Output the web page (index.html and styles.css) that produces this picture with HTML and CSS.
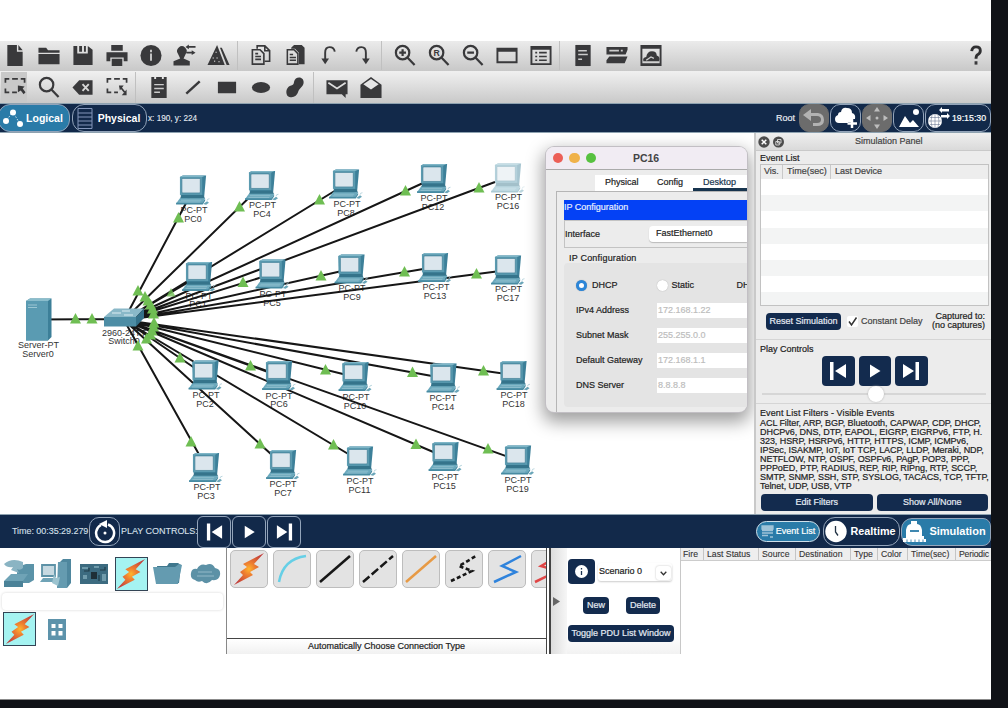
FILE: index.html
```html
<!DOCTYPE html>
<html lang="en">
<head>
<meta charset="utf-8">
<title>Packet Tracer</title>
<link rel="stylesheet" href="styles.css">
</head>
<body>
<svg class="defs" width="0" height="0">
  <defs>
    <radialGradient id="spark" cx=".5" cy=".5" r=".55"><stop offset="0" stop-color="#ffb52e"/><stop offset=".35" stop-color="#ee7f30"/><stop offset="1" stop-color="#c23f3c"/></radialGradient>
    <symbol id="pc" viewBox="0 0 36 32" overflow="visible">
      <path d="M4 1.5 L7 0 H31 L29 22 L26 24 H5Z" fill="#3d8099"/>
      <path d="M4 1.5H27V20H4Z" fill="#5b9bb0"/>
      <path d="M4 1.5L7 0H30.5L27 1.5Z" fill="#7fb6c7"/>
      <rect x="6" y="3" width="19" height="15" rx="1" fill="#dbe6ed" stroke="#3f7d94" stroke-width=".7"/>
      <path d="M6 20H28L30 24H4Z" fill="#35748b"/>
      <path d="M4 23.5H30L27 29H0Z" fill="#6ba9bd"/>
      <path d="M0 28H27L30 24V26L27.500 30H0Z" fill="#478ba2"/>
      <path d="M5 25.500H26M3.500 27.300H25" stroke="#a7ccd8" stroke-width=".6"/>
      <path d="M28 29.500L32 26.500L34 28L31 30.300Z" fill="#69a5b8"/>
      <path d="M32 26Q32 24 34.500 24" fill="none" stroke="#a9cbd6" stroke-width=".8"/>
    </symbol>
    <symbol id="up" viewBox="0 0 11 11" overflow="visible"><path d="M5.500 0L11 10.500H0Z" fill="#6fbe53"/></symbol>
    <symbol id="bolt" viewBox="0 0 34 34"><path d="M32 1L11 12L15 15L8 20L11 23L2 33L21 23L18 20L27 15L22 12Z" fill="url(#spark)"/></symbol>
    <symbol id="prev" viewBox="0 0 20 20"><path d="M2 1H5.500V19H2ZM18 3V17L7 10Z" fill="#fff"/></symbol>
    <symbol id="play" viewBox="0 0 20 20"><path d="M5 3.500L15.500 10L5 16.500Z" fill="#fff"/></symbol>
    <symbol id="next" viewBox="0 0 20 20"><path d="M14.500 1H18V19H14.500ZM2 3V17L13 10Z" fill="#fff"/></symbol>
  </defs>
</svg>

<div class="app">
  <header class="toolbar toolbar-main">
    <div class="group">
      <svg class="ic" viewBox="0 0 24 24"><path d="M4 1H14V8H20V23H4ZM15.500 1L20 6.500H15.500Z"/></svg>
      <svg class="ic" viewBox="0 0 24 24"><path d="M1 4H9L11 6.500H23V9H1ZM1 10.500H23V21H1Z"/></svg>
      <svg class="ic" viewBox="0 0 24 24"><path d="M2 2H6V10H17V2L22 6V22H2ZM8 2H11V8H8ZM13 2H15V8H13Z"/></svg>
      <svg class="ic" viewBox="0 0 24 24"><path d="M6 1H18V7H6ZM1 8.500H23V18H19V14H5V18H1ZM6.500 15.500H17.500V23H6.500Z"/></svg>
      <svg class="ic" viewBox="0 0 24 24"><circle cx="12" cy="12" r="11"/><path d="M11 6H13V8.500H11ZM11 10H13V17.500H11Z" fill="#c9c9c9"/></svg>
      <svg class="ic" viewBox="0 0 24 24"><path d="M4.500 10A5 5 0 1 1 13 10L10.500 15L17 18V22.500H0V18L7 15ZM12.500 3L16 .5V2H23V4H16V5.500ZM23 9L19 6.500V8H13.500V10H19V11.500Z"/></svg>
      <svg class="ic" viewBox="0 0 24 24"><path d="M10 1L18 22H0ZM13 4H15L23 22H20Z"/><path d="M9 8V9M6 14V15M10 14V15M12 18V19M7 18H8" stroke="#ccc" stroke-width="1.500"/></svg>
    </div>
    <div class="group">
      <svg class="ic" viewBox="0 0 24 24"><g fill="none" stroke="#39393b" stroke-width="1.700"><path d="M8 5V2H16L21 7V18H16M3 6H11L15 10V21H3ZM16 2V7H21"/><path d="M6 10H9M6 13H12M6 16H12"/></g></svg>
      <svg class="ic" viewBox="0 0 24 24"><path d="M8 4L11 1H19L22 4V21H16V9L12 5H8Z"/><g fill="none" stroke="#39393b" stroke-width="1.600"><path d="M4 6H11L15 10V21H4Z"/><path d="M6.500 11H10M6.500 14H13M6.500 17H13"/></g></svg>
      <svg class="ic" viewBox="0 0 24 24"><path d="M18 8C17 2 8 1 8 9V16" fill="none" stroke="#39393b" stroke-width="2"/><path d="M4 15H12L8 21Z"/></svg>
      <svg class="ic" viewBox="0 0 24 24"><path d="M5 8C6 2 15 1 15 9V16" fill="none" stroke="#39393b" stroke-width="2"/><path d="M11 15H19L15 21Z"/></svg>
    </div>
    <div class="group">
      <svg class="ic" viewBox="0 0 24 24"><g fill="none" stroke="#39393b" stroke-width="2.300"><circle cx="9.500" cy="9" r="7"/><path d="M14.500 14L22 22M6 9H13M9.500 5.500V12.500"/></g></svg>
      <svg class="ic" viewBox="0 0 24 24"><g fill="none" stroke="#39393b" stroke-width="2.300"><circle cx="9.500" cy="9" r="7"/><path d="M14.500 14L22 22"/></g><text x="9.500" y="12.300" class="mag-letter">R</text></svg>
      <svg class="ic" viewBox="0 0 24 24"><g fill="none" stroke="#39393b" stroke-width="2.300"><circle cx="9.500" cy="9" r="7"/><path d="M14.500 14L22 22M6 9H13"/></g></svg>
      <svg class="ic" viewBox="0 0 24 24"><path d="M1 4H23V20H1ZM3 8V18H21V8Z" fill-rule="evenodd"/></svg>
      <svg class="ic" viewBox="0 0 24 24"><path d="M1 2H23V22H1ZM3 6V20H21V6Z" fill-rule="evenodd"/><path d="M6 9H8M10 9H18M6 13H8M10 13H18M6 17H8M10 17H18" stroke="#39393b" stroke-width="1.600"/></svg>
    </div>
    <div class="group last">
      <svg class="ic" viewBox="0 0 24 24"><path d="M4 1H20V23H4Z"/><path d="M7 7H16M7 11H17M7 16H11" stroke="#ccc" stroke-width="1.500"/></svg>
      <svg class="ic" viewBox="0 0 24 24"><path d="M1 3H23V6L21 11H1ZM4 13H23L20 20H1V17Z"/><path d="M4 7H14M16 7H18" stroke="#ccc" stroke-width="1.900"/></svg>
      <svg class="ic" viewBox="0 0 24 24"><path d="M1 1H23V23H1ZM3 5V20H21V5Z" fill-rule="evenodd"/><path d="M4 18Q3 14 7 13.500Q8 7.500 13 7.500Q18 7.500 18 12Q22 13 20.500 18Z"/><path d="M7 17L12 13.500L15 15" fill="none" stroke="#ccc" stroke-width="1.400"/></svg>
    </div>
    <svg class="ic help" viewBox="0 0 24 24"><path d="M7.500 7.500Q8 3 12 3Q16.500 3 16.500 7Q16.500 9.500 14 11Q12 12 12 15.500" fill="none" stroke="#2f2f31" stroke-width="3"/><rect x="10.500" y="18" width="3" height="3.500"/></svg>
  </header>

  <div class="toolbar toolbar-draw">
    <div class="group">
      <svg class="ic picked" viewBox="0 0 24 24"><path d="M2 7V3H6M9 3H15M18 3H22V7M2 13V17H6M9 17H14" fill="none" stroke="#39393b" stroke-width="1.800"/><path d="M15 10L22 11L20 13L23 17L21 19L18 15L15 17Z"/></svg>
      <svg class="ic" viewBox="0 0 24 24"><g fill="none" stroke="#39393b" stroke-width="2.300"><circle cx="9.500" cy="9" r="7"/><path d="M14.500 14L22 22"/></g></svg>
      <svg class="ic" viewBox="0 0 24 24"><path d="M1 12L8 4.500H22V19.500H8Z"/><path d="M11.500 8.500L18 15.500M18 8.500L11.500 15.500" stroke="#d6d6d6" stroke-width="2"/></svg>
      <svg class="ic" viewBox="0 0 24 24"><path d="M2 7V3H6M9 3H15M18 3H22V7M2 13V17H6M9 17H13M16 12L20 17" fill="none" stroke="#39393b" stroke-width="1.800"/><path d="M14 10H19L15 15ZM22 14V20H17Z"/></svg>
    </div>
    <div class="group">
      <svg class="ic" viewBox="0 0 24 24"><path d="M4 1H7V3H9V1H15V3H17V1H20V23H4Z"/><path d="M7 9H17M7 13H17M7 17H13" stroke="#ccc" stroke-width="1.500"/></svg>
      <svg class="ic" viewBox="0 0 24 24"><path d="M5 18.500L19 5.500" stroke="#39393b" stroke-width="2.500"/></svg>
      <svg class="ic" viewBox="0 0 24 24"><path d="M2.500 6H21.500V18H2.500Z"/></svg>
      <svg class="ic" viewBox="0 0 24 24"><ellipse cx="12" cy="12" rx="9.500" ry="5.700"/></svg>
      <svg class="ic" viewBox="0 0 24 24"><path d="M11 6C12 0 21 0 21 6.500C21 11 17 12 15.500 16C14 22 8 24 4 20.500C1.500 16 4 11 8 10Q11 9 11 6Z"/></svg>
    </div>
    <div class="group last">
      <svg class="ic" viewBox="0 0 24 24"><path d="M1 4.500H23V19H21V23L17 19H1Z"/><path d="M3 7L12 13L21 7" fill="none" stroke="#ddd" stroke-width="1.800"/></svg>
      <svg class="ic" viewBox="0 0 24 24"><path d="M1 9L12 1L23 9V23H1Z"/><path d="M4 8.500L12 3L20 8.500L12 14Z" fill="#e6e6e6"/></svg>
    </div>
  </div>

  <nav class="viewbar">
    <button class="tab tab-logical"><svg width="22" height="20" viewBox="0 0 22 20"><path d="M3 14L11 4L18 16" fill="none" stroke="#cfe4f0" stroke-width="1" stroke-dasharray="1.500 1.500"/><circle cx="4" cy="13" r="3" fill="#fff"/><circle cx="11" cy="4.500" r="3" fill="#fff"/><circle cx="18" cy="16" r="3" fill="#fff"/></svg>Logical</button>
    <button class="tab tab-physical"><svg width="16" height="21" viewBox="0 0 16 21"><path d="M1 .5H15V20.500H1ZM1 5H15M1 9H15M1 13H15M1 17H15" fill="none" stroke="#8396ba" stroke-width="1"/></svg>Physical</button>
    <span class="coords">x: 190, y: 224</span>
    <span class="root">Root</span>
    <div class="navbtns">
      <button class="nb off"><svg width="24" height="20" viewBox="0 0 24 20"><path d="M1 7L9 1V5H16Q22 6 22 12Q22 18 15 18H11V15H15Q19 15 19 11.500Q19 8 15 8H9V13Z" fill="#b2b2b2"/></svg></button>
      <button class="nb"><svg width="24" height="24" viewBox="0 0 24 24"><path d="M5 17Q1 17 1 13Q1 10 4 9Q4 6 7 6Q8 1 13 2Q18 2 18 7Q22 8 21 13H17V16H14V17Z" fill="#fff"/><path d="M18 13V22M13.500 17.500H23" stroke="#fff" stroke-width="2.500"/></svg></button>
      <button class="nb off"><svg width="22" height="22" viewBox="0 0 22 22"><path d="M11 0L14 4.500H8ZM11 22L14 17.500H8ZM0 11L4.500 8V14ZM22 11L17.500 8V14Z" fill="#bdbdbd"/><circle cx="11" cy="11" r="1.500" fill="#bdbdbd"/></svg></button>
      <button class="nb"><svg width="22" height="20" viewBox="0 0 22 20"><path d="M1 19L7 8L12 15L15 12L21 19Z" fill="#fff"/><circle cx="18" cy="4" r="3" fill="#fff"/></svg></button>
      <button class="nb clock"><svg width="23" height="22" viewBox="0 0 23 22"><circle cx="8" cy="14" r="7" fill="#fff"/><path d="M1 14H15M3 10.500H13M3 17.500H13M8 7V21M5 8Q3 14 5 20M11 8Q13 14 11 20" fill="none" stroke="#566684" stroke-width=".5"/><path d="M12 3L15 0V2H22V4.500H15V6ZM23 9L20 6V8H14V10.500H20V12Z" fill="#fff"/></svg>19:15:30</button>
    </div>
  </nav>

  <main class="work">
    <section class="canvas">
      <svg class="topology" width="756" height="381" viewBox="0 133 756 381">
        <g class="names">
          <text x="38.500" y="348">Server-PT</text><text x="38" y="356.500">Server0</text>
          <text x="124" y="335.500">2960-24TT</text><text x="124" y="344">Switch0</text>
          <text x="194" y="213">PC-PT</text><text x="193" y="222">PC0</text>
          <text x="262.500" y="208">PC-PT</text><text x="262" y="217">PC4</text>
          <text x="347" y="206.500">PC-PT</text><text x="346" y="215.500">PC8</text>
          <text x="434" y="201">PC-PT</text><text x="433" y="209.500">PC12</text>
          <text x="508.500" y="200">PC-PT</text><text x="508" y="209">PC16</text>
          <text x="199" y="298.500">PC-PT</text><text x="198" y="307">PC1</text>
          <text x="273" y="297">PC-PT</text><text x="272" y="306">PC5</text>
          <text x="352" y="291">PC-PT</text><text x="352" y="300">PC9</text>
          <text x="436" y="290">PC-PT</text><text x="435" y="298.500">PC13</text>
          <text x="508.500" y="292">PC-PT</text><text x="508" y="301">PC17</text>
          <text x="206" y="398">PC-PT</text><text x="205" y="406.500">PC2</text>
          <text x="279" y="398.500">PC-PT</text><text x="279" y="407">PC6</text>
          <text x="356" y="400">PC-PT</text><text x="355" y="409">PC10</text>
          <text x="443" y="401">PC-PT</text><text x="443" y="410">PC14</text>
          <text x="514" y="398">PC-PT</text><text x="513.500" y="407">PC18</text>
          <text x="207" y="490">PC-PT</text><text x="206" y="499">PC3</text>
          <text x="283" y="487">PC-PT</text><text x="283" y="496">PC7</text>
          <text x="360" y="484">PC-PT</text><text x="359.500" y="493">PC11</text>
          <text x="445" y="479.500">PC-PT</text><text x="444.500" y="488.500">PC15</text>
          <text x="518" y="483">PC-PT</text><text x="517.500" y="491.500">PC19</text>
        </g>
        <path class="cables" d="M38 319.500L124 319M124 320L193 190M124 320L262 185M124 320L346 184M124 320L434 178M124 320L495 182M124 320L199 276M124 320L272 274M124 320L351 269M124 320L435 267M124 320L508 270M124 320L205 375M124 320L279 376M124 320L355 377M124 320L443 378M124 320L513 375M124 320L206 467M124 320L283 465M124 320L360 461M124 320L445 457M124 320L517 460"/>
        <g>
          <path d="M26 301L30 298.500H51.500V337L48 340.500H26Z" fill="#3c7f98"/><path d="M26 301H48V340.500H26Z" fill="#5a9bb2"/><path d="M26 301L30 298.500H51.500L48 301Z" fill="#8abdcc"/><path d="M28 305H37M28 307.500H37" stroke="#acd0dc" stroke-width=".8"/>
          <path d="M104 317L114 308.500H144L136 317Z" fill="#8ab8c8"/><path d="M104 317H136V326.500H104Z" fill="#4d8da5"/><path d="M136 317L144 308.500V318L136 326.500Z" fill="#34718a"/><path d="M112 313H121M122 311H130M124 315H133" stroke="#dcecf1" stroke-width="1.200"/>
        </g>
        <g>
          <use href="#pc" x="176" y="175.500" width="35" height="31"/><use href="#pc" x="245" y="171" width="35" height="31"/>
          <use href="#pc" x="329" y="169.500" width="35" height="31"/><use href="#pc" x="417" y="164" width="35" height="31"/>
          <use href="#pc" x="491" y="163.500" width="35" height="31" class="ghost"/><use href="#pc" x="182" y="262" width="35" height="31"/>
          <use href="#pc" x="255.500" y="259.500" width="35" height="31"/><use href="#pc" x="334.500" y="254.500" width="35" height="31"/>
          <use href="#pc" x="418" y="253" width="35" height="31"/><use href="#pc" x="491" y="255.500" width="35" height="31"/>
          <use href="#pc" x="188.500" y="360.500" width="35" height="31"/><use href="#pc" x="262" y="361" width="35" height="31"/>
          <use href="#pc" x="338.500" y="362" width="35" height="31"/><use href="#pc" x="426.500" y="363.500" width="35" height="31"/>
          <use href="#pc" x="496.500" y="361" width="35" height="31"/><use href="#pc" x="189" y="453" width="35" height="31"/>
          <use href="#pc" x="266" y="450" width="35" height="31"/><use href="#pc" x="343" y="446.500" width="35" height="31"/>
          <use href="#pc" x="428.500" y="442" width="35" height="31"/><use href="#pc" x="501" y="445.500" width="35" height="31"/>
        </g>
        <g>
          <use href="#up" x="70" y="313" width="11" height="11"/><use href="#up" x="86.500" y="313" width="11" height="11"/>
          <use href="#up" x="173" y="212" width="11" height="11"/><use href="#up" x="234" y="201" width="11" height="11"/>
          <use href="#up" x="314" y="194" width="11" height="11"/><use href="#up" x="400" y="185" width="11" height="11"/>
          <use href="#up" x="473.500" y="182" width="11" height="11"/><use href="#up" x="165.500" y="288" width="11" height="9" opacity=".8"/>
          <use href="#up" x="237.500" y="276.500" width="11" height="11"/><use href="#up" x="315.500" y="270" width="11" height="11"/>
          <use href="#up" x="399" y="266" width="11" height="11"/><use href="#up" x="471" y="268" width="11" height="11"/>
          <use href="#up" x="174.500" y="352" width="11" height="11"/><use href="#up" x="245" y="360" width="11" height="11"/>
          <use href="#up" x="320" y="364" width="11" height="11"/><use href="#up" x="407" y="366.500" width="11" height="11"/>
          <use href="#up" x="478" y="365" width="11" height="11"/><use href="#up" x="185.500" y="436" width="11" height="11"/>
          <use href="#up" x="254.500" y="438" width="11" height="11"/><use href="#up" x="328" y="439" width="11" height="11"/>
          <use href="#up" x="410.500" y="438.500" width="11" height="11"/><use href="#up" x="482.500" y="443" width="11" height="11"/>
          <use href="#up" x="132.500" y="285" width="11" height="11"/><use href="#up" x="139.500" y="291" width="11" height="11"/>
          <use href="#up" x="142.500" y="295" width="11" height="11"/><use href="#up" x="145" y="299" width="11" height="11"/>
          <use href="#up" x="147" y="303" width="11" height="11"/><use href="#up" x="148" y="308" width="11" height="11"/>
          <use href="#up" x="148.500" y="317" width="11" height="11"/><use href="#up" x="148" y="321" width="11" height="11"/>
          <use href="#up" x="146.500" y="325" width="11" height="11"/><use href="#up" x="145" y="329" width="11" height="11"/>
          <use href="#up" x="141" y="333" width="11" height="11"/><use href="#up" x="132.500" y="340" width="11" height="11"/>
        </g>
      </svg>

      <div class="dialog">
        <div class="titlebar"><i class="dot red"></i><i class="dot amber"></i><i class="dot green"></i><b>PC16</b></div>
        <div class="dialog-body">
          <div class="dtabs"><span>Physical</span><span>Config</span><span class="current">Desktop</span></div>
          <div class="pane">
            <div class="bluebar">IP Configuration</div>
            <div class="iface"><span>Interface</span><div class="combo">FastEthernet0</div></div>
            <div class="legend">IP Configuration</div>
            <div class="fieldset">
              <div class="radios"><i class="radio on"></i><span class="dhcp">DHCP</span><i class="radio"></i><span class="static">Static</span><span>DH</span></div>
              <div class="field"><span>IPv4 Address</span><div>172.168.1.22</div></div>
              <div class="field"><span>Subnet Mask</span><div>255.255.0.0</div></div>
              <div class="field"><span>Default Gateway</span><div>172.168.1.1</div></div>
              <div class="field"><span>DNS Server</span><div>8.8.8.8</div></div>
            </div>
          </div>
        </div>
      </div>
    </section>

    <aside class="sim">
      <div class="sim-head">
        <svg width="26" height="12" viewBox="0 0 26 12"><circle cx="6" cy="6" r="5.700" fill="#4c4c4c"/><path d="M3.700 3.700L8.300 8.300M8.300 3.700L3.700 8.300" stroke="#fff" stroke-width="1.500"/><circle cx="20.500" cy="6" r="5.500" fill="#4c4c4c"/><path d="M19.500 3.500H23V7H19.500ZM17.800 5.500H21.300V9H17.800Z" fill="none" stroke="#ddd" stroke-width=".9"/></svg>
        <span>Simulation Panel</span>
      </div>
      <div class="sim-body">
        <div class="strong">Event List</div>
        <div class="events">
          <div class="ehead"><span class="vis">Vis.</span><span class="time">Time(sec)</span><span>Last Device</span></div>
          <div class="stripes"></div>
        </div>
        <div class="resetrow">
          <button class="btn reset">Reset Simulation</button>
          <label class="delay"><svg width="13" height="13" viewBox="0 0 13 13"><rect x="1" y="1" width="11" height="11" rx="2" fill="#fff"/><path d="M3 6.500L5.500 10L10.500 2.500" fill="none" stroke="#333" stroke-width="1.500"/></svg>Constant Delay</label>
          <div class="captured">Captured to:<br>(no captures)</div>
        </div>
        <div class="playbox">
          <div class="playtitle">Play Controls</div>
          <div class="playbtns">
            <button class="btn"><svg width="20" height="20"><use href="#prev"/></svg></button>
            <button class="btn"><svg width="20" height="20"><use href="#play"/></svg></button>
            <button class="btn"><svg width="20" height="20"><use href="#next"/></svg></button>
          </div>
          <div class="slider"><i></i></div>
        </div>
        <div class="filters">
          <div class="strong">Event List Filters - Visible Events</div>
          <p>ACL Filter, ARP, BGP, Bluetooth, CAPWAP, CDP, DHCP,<br>DHCPv6, DNS, DTP, EAPOL, EIGRP, EIGRPv6, FTP, H.<br>323, HSRP, HSRPv6, HTTP, HTTPS, ICMP, ICMPv6,<br>IPSec, ISAKMP, IoT, IoT TCP, LACP, LLDP, Meraki, NDP,<br>NETFLOW, NTP, OSPF, OSPFv6, PAgP, POP3, PPP,<br>PPPoED, PTP, RADIUS, REP, RIP, RIPng, RTP, SCCP,<br>SMTP, SNMP, SSH, STP, SYSLOG, TACACS, TCP, TFTP,<br>Telnet, UDP, USB, VTP</p>
          <div class="filterbtns"><button class="btn">Edit Filters</button><button class="btn">Show All/None</button></div>
        </div>
      </div>
    </aside>
  </main>

  <div class="timebar">
    <span class="clocktext">Time: 00:35:29.279</span>
    <button class="nb cycle"><svg width="22" height="24" viewBox="0 0 22 24"><path d="M7 5A9 9 0 1 0 14 4.500" fill="none" stroke="#fff" stroke-width="2.500"/><path d="M13 0V8L5 4Z" fill="#fff"/><circle cx="11" cy="13" r="1.500" fill="#fff"/></svg></button>
    <span class="pc-label">PLAY CONTROLS:</span>
    <button class="pbtn"><svg width="19" height="20"><use href="#prev"/></svg></button>
    <button class="pbtn"><svg width="19" height="20"><use href="#play"/></svg></button>
    <button class="pbtn"><svg width="19" height="20"><use href="#next"/></svg></button>
    <div class="modes">
      <button class="mode evlist"><svg width="13" height="14" viewBox="0 0 13 14"><path d="M1 1H12V4H1ZM1 5.500H12M1 8H12M1 10.500H7M9 12H12" fill="#9fc3d8" stroke="#9fc3d8" stroke-width="1.300"/></svg>Event List</button>
      <button class="mode real"><svg width="22" height="23" viewBox="0 0 22 23"><circle cx="11" cy="11.500" r="10.700" fill="#fff"/><path d="M10.500 6V12L13 15.500" fill="none" stroke="#234" stroke-width="1.300"/></svg>Realtime</button>
      <button class="mode simu"><svg width="23" height="22" viewBox="0 0 23 22"><path d="M3 15V9Q4 3 8 3V0H14V3Q18 3 19 9V15H21V18H23V21H0V17H3Z" fill="#fff"/><path d="M7 10H16" stroke="#2a7ba8" stroke-width="1.800"/><path d="M4 18.500V21M8 18.500V21M12 18.500V21M16 18.500V21M20 18.500V21" stroke="#4c8cb0" stroke-width="1"/></svg>Simulation</button>
    </div>
  </div>

  <footer class="bottom">
    <section class="palette">
      <div class="prow">
        <div class="dev"><svg width="32" height="30" viewBox="0 0 32 30"><path d="M14 8L23 5H31V21L26 24H14Z" fill="#5b93a8"/><path d="M1 5Q9-2 20 3V9Q17 12 14 10L16 14L8 11L10 8Q4 9 1 5Z" fill="#8ab4c3"/><path d="M1 22L8 15H25L20 22V28H1Z" fill="#6fa3b6"/><path d="M1 22H20V28H1Z" fill="#4b8298"/></svg></div>
        <div class="dev"><svg width="32" height="30" viewBox="0 0 32 30"><path d="M20 3L23 0H31V24L27 29H17Z" fill="#4f879e"/><path d="M18 3H27V29H17Z" fill="#659bb0"/><path d="M2 6H15V17H2Z" fill="#c6d9e1" stroke="#5d92a7" stroke-width="1.800"/><path d="M3 19H17L14 23H0Z" fill="#6fa3b6"/><path d="M14 15L16 19L20 18L18 27L12 24Z" fill="#9cc3cf"/></svg></div>
        <div class="dev"><svg width="30" height="24" viewBox="0 0 30 24"><path d="M1 2H29V22H1Z" fill="#3c6b80"/><path d="M3 5H9V7H3ZM15 4H20V6H15ZM23 12H27V19H23ZM4 13H8V17H4Z" fill="#6f9bab"/><path d="M12 10H18V17H12Z" fill="#1f2f37"/><path d="M10 6V9H5M21 8H26V5M20 19V13" fill="none" stroke="#203d49" stroke-width="1.200"/></svg></div>
        <div class="dev chosen"><svg width="32" height="32"><use href="#bolt"/></svg></div>
        <div class="dev"><svg width="30" height="24" viewBox="0 0 30 24"><path d="M4 4L14 4L16 1H25L28 3L26 21H6Z" fill="#3f778d"/><path d="M0 5H22L26 2L29 3L25 22H3Z" fill="#649bb0"/></svg></div>
        <div class="dev"><svg width="31" height="22" viewBox="0 0 31 22"><path d="M5 17Q0 16 1 10Q2 5 7 6Q10 0 16 2Q22-1 25 5Q31 6 30 12Q29 18 22 17Q17 23 12 18Q8 20 5 17Z" fill="#5c91a6"/><path d="M8 9H22M7 13H24" stroke="#93b9c8" stroke-width="1"/></svg></div>
      </div>
      <div class="search"></div>
      <div class="prow second">
        <div class="dev chosen"><svg width="32" height="32"><use href="#bolt"/></svg></div>
        <div class="dev"><svg width="18" height="21" viewBox="0 0 18 21"><path d="M0 0H18V21H0Z" fill="#5d93ab"/><path d="M3.500 5H7.500V9H3.500ZM10.500 5H14.500V9H10.500ZM3.500 12H7.500V16.500H3.500ZM10.500 12H14.500V16.500H10.500Z" fill="#fff"/></svg></div>
      </div>
    </section>
    <section class="conns">
      <div class="crow">
        <div class="cbtn"><svg width="34" height="34"><use href="#bolt"/></svg></div>
        <div class="cbtn"><svg width="34" height="34" viewBox="0 0 34 34"><path d="M4 30Q8 7 31 4" fill="none" stroke="#66cfe6" stroke-width="2.500"/></svg></div>
        <div class="cbtn"><svg width="34" height="34" viewBox="0 0 34 34"><path d="M2 30L32 4" stroke="#171717" stroke-width="2.500"/></svg></div>
        <div class="cbtn"><svg width="34" height="34" viewBox="0 0 34 34"><path d="M2 30L32 4" stroke="#171717" stroke-width="2.500" stroke-dasharray="8.500 3"/></svg></div>
        <div class="cbtn"><svg width="34" height="34" viewBox="0 0 34 34"><path d="M2 30L32 4" stroke="#e79a45" stroke-width="2.500"/></svg></div>
        <div class="cbtn"><svg width="34" height="34" viewBox="0 0 34 34"><path d="M4 29L25 19L12 14L29 4" fill="none" stroke="#171717" stroke-width="2.600" stroke-dasharray="4 2.500"/></svg></div>
        <div class="cbtn"><svg width="34" height="34" viewBox="0 0 34 34"><path d="M4 30L26 20L12 14L31 4" fill="none" stroke="#2f83dc" stroke-width="2.500"/></svg></div>
        <div class="cbtn"><svg width="34" height="34" viewBox="0 0 34 34"><path d="M2 30L25 19L8 14L20 7" fill="none" stroke="#e04545" stroke-width="2.500"/></svg></div>
      </div>
      <div class="ctitle">Automatically Choose Connection Type</div>
    </section>
    <div class="splitter"><svg width="7" height="9" viewBox="0 0 7 9"><path d="M0 0L7 4.500L0 9Z" fill="#666"/></svg></div>
    <section class="scenario">
      <div class="srow1">
        <button class="btn info"><svg width="15" height="15" viewBox="0 0 15 15"><circle cx="7.500" cy="7.500" r="6.500" fill="#fff"/><path d="M7.500 4V5.500M7.500 7V11" stroke="#17304f" stroke-width="1.300"/></svg></button>
        <div class="select"><span>Scenario 0</span><i><svg width="7" height="5" viewBox="0 0 7 5"><path d="M.7 .8L3.500 3.800L6.300 .8" fill="none" stroke="#333" stroke-width="1.300"/></svg></i></div>
      </div>
      <div class="srow2"><button class="btn">New</button><button class="btn">Delete</button></div>
      <button class="btn toggle">Toggle PDU List Window</button>
    </section>
    <section class="pdu">
      <div class="phead"><span class="c1">Fire</span><span class="c2">Last Status</span><span class="c3">Source</span><span class="c4">Destination</span><span class="c5">Type</span><span class="c6">Color</span><span class="c7">Time(sec)</span><span class="c8">Periodic</span></div>
    </section>
  </footer>
</div>
</body>
</html>
```
FILE: styles.css
```css
* { box-sizing: border-box; }
html, body { margin: 0; height: 708px; overflow: hidden; }
body { background: #101217; font: 9px/11px "Liberation Sans", Arial, sans-serif; color: #222; white-space: nowrap; -webkit-text-stroke: .2px; }
button { font: inherit; margin: 0; padding: 0; border: 0; display: flex; align-items: center; justify-content: center; color: #fff; }
svg { display: block; flex: none; }
b, .tab, .real, .simu { -webkit-text-stroke: 0; }
.defs { position: absolute; }
.app { width: 991px; height: 700px; padding-top: 41px; background: #fff; border-bottom: 1px solid #8b8b8b; overflow: hidden; }

.toolbar { display: flex; background: linear-gradient(#ebebeb, #c8c8c8); align-items: center; }
.toolbar-main { height: 30px; padding-bottom: 1px; }
.toolbar-draw { height: 32px; background: linear-gradient(#efefef, #c9c9c9); border-top: 1px solid #efefef; }
.group { display: flex; height: 100%; align-items: center; margin-right: 6px; border-right: 1px solid #c0c0c0; padding-right: 1px; }
.group:first-child { margin-left: -2px; }
.group.last { border: 0; }
.ic { width: 34px; height: 23px; fill: #39393b; }
.ic.picked { background: linear-gradient(90deg, transparent 3px, #c9c9c9 3px, #c9c9c9 29px, transparent 29px); height: 31px; padding: 4px 0; }
.help { margin-left: auto; margin-right: -2px; }
.mag-letter { font-size: 9px; font-weight: bold; text-anchor: middle; }

.viewbar { height: 30px; background: #12294a; border-top: 1px solid #8ea2b0; border-bottom: 1px solid #8ea2b0; display: flex; align-items: center; color: #e6ebf2; }
.tab { height: 28px; border: 1px solid #93a4ba; border-radius: 12px; font-weight: bold; font-size: 10.500px; }
.tab-logical { width: 72px; margin-left: -2px; background: #2a7ba8; gap: 2px; padding-right: 3px; }
.tab-physical { width: 75px; margin-left: 2px; background: #12294a; gap: 5px; padding-right: 2px; }
.coords { margin-left: 1px; font-size: 8.200px; -webkit-text-stroke: .1px; }
.root { margin-left: auto; margin-right: 4px; }
.navbtns { display: flex; gap: 1px; }
.nb { width: 31px; height: 28px; border: 1px solid #93a4ba; border-radius: 10px; background: #12294a; }
.nb.off { background: #6c6c6c; border-color: #6c6c6c; width: 30px; }
.nb.clock { width: 66px; font-size: 8.800px; gap: 2px; padding-right: 3px; }

.work { display: flex; height: 381px; }
.canvas { width: 756px; position: relative; background: #fff; border-right: 2px solid #c9c9c9; overflow: hidden; }
.names { font-size: 9px; text-anchor: middle; fill: #333; }
.cables { stroke: #161616; stroke-width: 2; fill: none; }
.ghost { opacity: .45; }
.topology { width: 756px; }

.dialog { position: absolute; left: 546px; top: 14px; width: 201px; height: 265px; background: #ececec; border-radius: 8px; overflow: hidden; box-shadow: 0 0 0 1px #c2bfc4, 0 7px 17px 3px rgba(0,0,0,.38); font-size: 9px; }
.titlebar { height: 23px; background: #f1ecf3; border-bottom: 1px solid #aaa; display: flex; align-items: center; gap: 6px; padding-left: 7px; font-size: 10.500px; }
.titlebar b { margin-left: 31px; color: #444; }
.dot { width: 10.300px; height: 10.300px; border-radius: 50%; }
.red { background: #ec5f57; } .amber { background: #f0b24a; } .green { background: #57c140; }
.dialog-body { padding: 5px 0 0 10px; height: 243px; }
.dtabs { margin-left: 39px; height: 16px; background: #fff; display: flex; align-items: center; }
.dtabs span { padding-left: 10px; width: 52px; height: 16px; line-height: 15px; }
.dtabs span + span { width: 46px; }
.dtabs .current { width: 54px; border-bottom: 3px solid #17344e; color: #17344e; }
.pane { border: 1px solid #b5b5b5; border-right: 0; border-bottom: 0; height: 222px; padding: 8px 0 0 7px; }
.bluebar { height: 20px; line-height: 15px; background: #0441f5; color: #e6edff; }
.iface { height: 28px; border: 1px solid #c3c3c3; border-right: 0; display: flex; align-items: center; justify-content: space-between; }
.combo { width: 98px; height: 16px; background: #fff; border-radius: 4px 0 0 4px; padding-left: 7px; line-height: 15px; box-shadow: 0 1px 1px #bbb; }
.legend { margin: 4px 0 0 5px; height: 12px; line-height: 12px; letter-spacing: .2px; }
.fieldset { background: #e4e4e4; border-radius: 4px 0 0 4px; height: 144px; padding: 13px 0 0 12px; margin-top: -1px; }
.radios { display: flex; height: 18px; align-items: center; }
.radio { flex: none; width: 11px; height: 11px; border-radius: 50%; background: #fff; box-shadow: 0 0 1px #999; }
.radio.on { border: 3.500px solid #2c86d8; }
.dhcp { flex: none; margin-left: 4px; width: 66px; }
.static { flex: none; margin-left: 3px; width: 65px; }
.radios .dhcp + .radio { margin-left: 0; }
.radios .static { margin-left: 4px; }
.radios .dhcp { margin-left: 5px; width: 64.500px; }
.field { display: flex; align-items: center; height: 15px; margin-bottom: 10px; }
.radios + .field { margin-top: 9px; }
.field span { width: 81px; }
.field div { flex: 1; height: 15px; background: #fff; color: #bdbdbd; line-height: 15px; padding-left: 1px; }

.sim { width: 235px; background: #ececec; }
.sim-head { height: 18px; background: linear-gradient(#efefef, #dadada); border-bottom: 1px solid #c9c9c9; display: flex; align-items: center; padding-left: 2px; }
.sim-head span { margin-left: 71px; color: #444; }
.sim-body > .strong { padding-left: 4px; height: 13px; line-height: 14px; }
.events { margin: 0 2px 0 4px; height: 142px; border: 1px solid #c2c2c2; }
.ehead { height: 14px; display: flex; line-height: 13px; color: #444; background: #ededed; }
.ehead span { padding-left: 4px; }
.ehead .vis { width: 22px; padding-left: 3px; border-right: 1px solid #c9c9c9; }
.ehead .time { width: 48px; border-right: 1px solid #c9c9c9; }
.stripes { height: 126px; background: repeating-linear-gradient(#fff 0 16.200px, #f3f4f4 16.200px 32.400px); }
.btn { background: #132b4e; border-radius: 4px; color: #e4eaf2; }
.resetrow { height: 34px; display: flex; align-items: center; border-bottom: 1px solid #d5d5d5; padding: 0 6px 3px 10px; }
.reset { width: 75px; height: 17px; }
.delay { display: flex; align-items: center; gap: 2px; margin-left: 5px; color: #444; }
.captured { margin-left: auto; text-align: right; line-height: 9px; }
.playbox { height: 64px; border-bottom: 1px solid #d5d5d5; padding-top: 3px; }
.playtitle { padding-left: 4px; height: 13px; line-height: 12px; }
.playbtns { display: flex; gap: 4px; padding-left: 66px; }
.playbtns .btn { width: 32.500px; height: 30px; }
.slider { height: 2px; background: #d6d6d6; margin: 7px 5px 0 6px; display: flex; align-items: center; }
.slider i { width: 16px; height: 16px; border-radius: 50%; background: #fff; margin-left: 106px; box-shadow: 0 0 2px #aaa; }
.filters { padding: 4px 0 0 4px; }
.filters .strong { height: 10px; line-height: 10px; letter-spacing: .1px; }
.filters p { margin: 1px 0 2px; line-height: 8.950px; height: 73px; letter-spacing: -.06px; }
.filterbtns { display: flex; gap: 4px; padding: 0 3px 0 1px; }
.filterbtns .btn { flex: 1; height: 17px; }

.timebar { height: 34px; background: #12294a; border-top: 1px solid #8ea2b0; display: flex; align-items: center; color: #d8e0ea; }
.clocktext { margin-left: 12px; width: 77px; letter-spacing: -.05px; -webkit-text-stroke: .1px; }
.cycle { width: 31px; height: 29px; }
.pc-label { margin-left: 1px; width: 76px; letter-spacing: -.03px; -webkit-text-stroke: .1px; }
.pbtn { width: 34px; height: 32px; border: 1px solid #93a4ba; border-radius: 6px; background: #12294a; margin-right: 1px; }
.modes { display: flex; margin-left: auto; align-items: center; }
.mode { border: 1px solid #93a4ba; font-weight: bold; }
.evlist { width: 64px; height: 21px; border: 1.500px solid #cfe0ea; border-radius: 11px; background: #2a7ba8; font-weight: normal; gap: 2px; margin-right: 3px; font-size: 9px; }
.real { width: 77px; height: 29px; border-radius: 12px; background: #12294a; font-size: 10.800px; gap: 3px; margin-right: 1px; padding-right: 2px; }
.simu { width: 90px; height: 28px; border-radius: 11px 8px 8px 11px; background: #2a7ba8; font-size: 11px; gap: 3px; padding-right: 3px; }

.bottom { display: flex; height: 106px; background: #fff; }
.palette { width: 226px; }
.prow { display: flex; padding: 9px 0 0 0; height: 44px; }
.dev { width: 37.500px; height: 34px; display: flex; align-items: center; justify-content: center; }
.dev.chosen { width: 33px; height: 34px; background: #a5f3f1; border: 1px solid #345; margin: 0 2px; }
.search { margin: 1px 3px 0 2px; height: 17px; border-radius: 4px; background: #fff; box-shadow: 0 0 3px #d4d4d4; }
.second { padding: 2px 0 0 1px; }
.conns { width: 321px; border-left: 1px solid #888; border-right: 1px solid #444; display: flex; flex-direction: column; justify-content: space-between; overflow: hidden; }
.crow { display: flex; gap: 5.500px; padding: 2px 0 0 3px; }
.cbtn { flex: none; width: 37.500px; height: 38px; background: #e3e3e3; border: 1px solid #bdbdbd; border-radius: 5px; display: flex; align-items: center; justify-content: center; }
.ctitle { height: 16px; border-top: 1px solid #444; text-align: center; line-height: 15px; background: linear-gradient(#fff, #f1f1f1); }
.splitter { width: 18px; margin-left: 2px; border-left: 2px solid #444; background: linear-gradient(90deg, #ddd, #f6f6f6); display: flex; align-items: center; padding-left: 2px; }
.scenario { width: 113px; background: linear-gradient(#fff 80%, #f2f2f2); padding: 11px 0 0 1px; }
.srow1 { display: flex; align-items: center; gap: 3px; }
.info { width: 27px; height: 25px; }
.select { width: 74px; height: 18px; background: #fff; box-shadow: 0 1px 2px #ccc; border-radius: 3px; display: flex; align-items: center; justify-content: space-between; padding: 0 1px; }
.select i { width: 15px; height: 14px; display: flex; align-items: center; justify-content: center; box-shadow: 0 0 2px #bbb; border-radius: 3px; margin-top: 3px; }
.srow2 { display: flex; gap: 17px; padding: 13px 0 0 15px; }
.srow2 .btn { width: 26px; height: 17px; }
.srow2 .btn + .btn { width: 34px; }
.toggle { width: 106px; height: 17px; margin-top: 11px; }
.pdu { flex: 1; border-left: 1px solid #c8c8c8; overflow: hidden; }
.phead { height: 13px; display: flex; background: #eee; border-bottom: 1px solid #ccc; line-height: 13px; padding-left: 2px; color: #333; font-size: 8.700px; -webkit-text-stroke: .1px; }
.phead span { flex: none; }
.phead .c1 { width: 20px; } .phead span + span { border-left: 1px solid #c5c5c5; padding-left: 3px; }
.c2 { width: 55px; } .c3 { width: 37px; } .c4 { width: 55px; } .c5 { width: 27px; } .c6 { width: 30px; } .c7 { width: 48px; } .phead .c8 { width: 37px; letter-spacing: -.2px; }
```
